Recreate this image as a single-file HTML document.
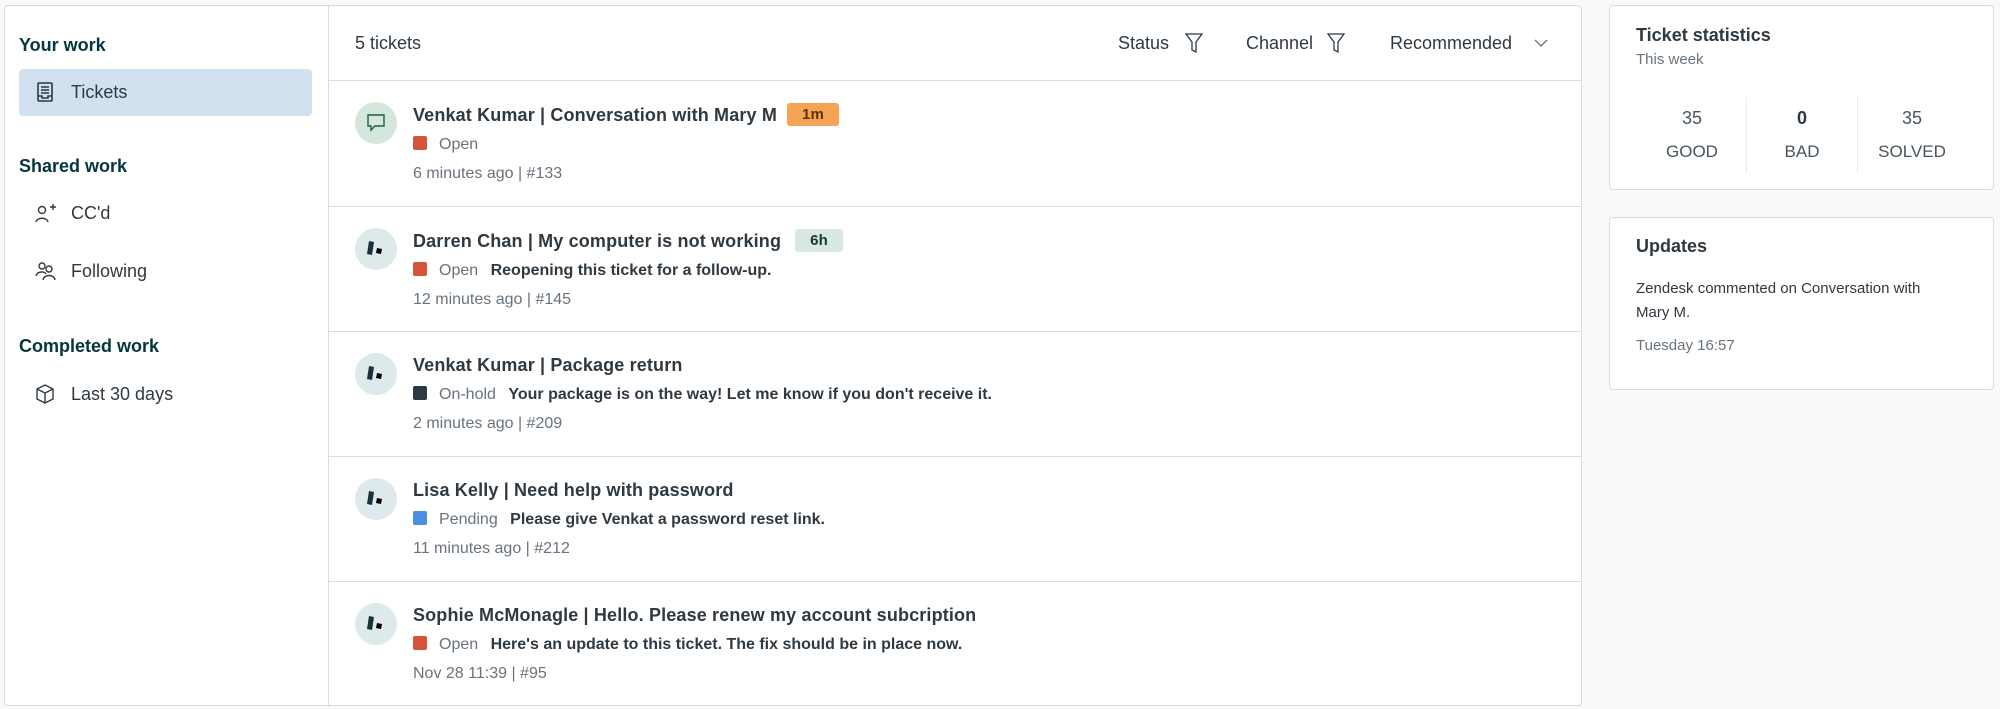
<!DOCTYPE html>
<html><head><meta charset="utf-8"><style>
*{box-sizing:border-box;margin:0;padding:0}
body{width:2000px;height:709px;background:#f8f9f9;font-family:"Liberation Sans",sans-serif;color:#2f3941;position:relative;overflow:hidden}
.abs{position:absolute}
.panel{position:absolute;background:#fff;border:1px solid #d8dcde;border-radius:4px}
.h{font-weight:bold;color:#03363d;font-size:18px}
.nav{font-size:18px;color:#2f3941}
.t{font-size:18px;font-weight:bold;color:#2f3941;white-space:nowrap;letter-spacing:0.15px}
.s{font-size:16px;color:#68737d;white-space:nowrap}
.b{font-weight:bold;color:#2f3941;margin-left:8px}
.sq{display:inline-block;width:14px;height:14px;border-radius:2px;vertical-align:-1px;margin-right:12px}
.row{position:absolute;left:0;width:1252px;height:126px;border-top:1px solid #d8dcde}
.av{position:absolute;left:26px;top:21px;width:42px;height:42px;border-radius:50%;background:#dde9ea}
.badge{display:inline-block;font-size:15px;font-weight:bold;padding:3px 15px;border-radius:3px;margin-left:10px;vertical-align:2px}
</style></head><body>
<div class="panel" style="left:4px;top:5px;width:325px;height:701px;border-right:none;border-radius:4px 0 0 4px"></div>
<div class="abs h" style="left:19px;top:35px">Your work</div>
<div class="abs" style="left:19px;top:69px;width:293px;height:47px;background:#d2e1ef;border-radius:4px"></div>
<svg class="abs" style="left:36px;top:82px" width="18" height="20" viewBox="0 0 18 20" fill="none" stroke="#2f3941" stroke-width="1.6"><rect x="2" y="1" width="14" height="18" rx="1"/><path d="M5 5h8M5 8h8M5 11h8M2 14h4v2h6v-2h4"/></svg>
<div class="abs nav" style="left:71px;top:82px">Tickets</div>
<div class="abs h" style="left:19px;top:156px">Shared work</div>
<svg class="abs" style="left:34px;top:203px" width="24" height="20" viewBox="0 0 24 20" fill="none" stroke="#2f3941" stroke-width="1.4"><circle cx="8" cy="7" r="3.5"/><path d="M2 19c1-5 11-5 12 0M16 4h6M19 1v6"/></svg>
<div class="abs nav" style="left:71px;top:203px">CC'd</div>
<svg class="abs" style="left:34px;top:261px" width="24" height="20" viewBox="0 0 24 20" fill="none" stroke="#2f3941" stroke-width="1.4"><circle cx="8" cy="5" r="3"/><circle cx="15" cy="8" r="3"/><path d="M2 15c1-5 9-5 10-2M9 19c1-6 11-6 12 0"/></svg>
<div class="abs nav" style="left:71px;top:261px">Following</div>
<div class="abs h" style="left:19px;top:336px">Completed work</div>
<svg class="abs" style="left:34px;top:383px" width="22" height="22" viewBox="0 0 22 22" fill="none" stroke="#2f3941" stroke-width="1.4" stroke-linejoin="round"><path d="M11 2l8 4v10l-8 4-8-4V6zM3 6l8 4 8-4M11 10v10"/></svg>
<div class="abs nav" style="left:71px;top:384px">Last 30 days</div>

<div class="panel" style="left:328px;top:5px;width:1254px;height:701px;border-radius:0 4px 4px 0">
<div class="abs" style="left:26px;top:27px;font-size:18px">5 tickets</div>
<div class="abs" style="left:789px;top:27px;font-size:18px">Status</div>
<svg class="abs" style="left:856px;top:26px" width="18" height="22" viewBox="0 0 18 22" fill="none" stroke="#2f3941" stroke-width="1.3"><path d="M1 2h16l-6 8v10l-4-2v-8z"/></svg>
<div class="abs" style="left:917px;top:27px;font-size:18px">Channel</div>
<svg class="abs" style="left:998px;top:26px" width="18" height="22" viewBox="0 0 18 22" fill="none" stroke="#2f3941" stroke-width="1.3"><path d="M1 2h16l-6 8v10l-4-2v-8z"/></svg>
<div class="abs" style="left:1061px;top:27px;font-size:18px">Recommended</div>
<svg class="abs" style="left:1204px;top:32px" width="16" height="10" viewBox="0 0 16 10" fill="none" stroke="#68737d" stroke-width="1.3"><path d="M2 2l6 6 6-6"/></svg>

<div class="row" style="top:74px">
<div class="av" style="background:#d5e7dd"><svg style="margin:11px" width="20" height="20" viewBox="0 0 20 20" fill="none" stroke="#186146" stroke-width="1.4"><path d="M2 2h16v11H9l-4 4v-4H2z"/></svg></div>
<div class="abs t" style="left:84px;top:22px">Venkat Kumar | Conversation with Mary M<span class="badge" style="background:#f5a455;color:#5c3304">1m</span></div>
<div class="abs s" style="left:84px;top:55px"><span class="sq" style="background:#d4553a"></span>Open</div>
<div class="abs s" style="left:84px;top:84px">6 minutes ago | #133</div>
</div>
<div class="row" style="top:200px">
<div class="av"><svg style="margin:11px" width="20" height="20" viewBox="0 0 20 20"><path d="M3 2l5 1-2 13-5-1z" fill="#17323a"/><path d="M11 9l5 1-1 5-5-1z" fill="#000"/></svg></div>
<div class="abs t" style="left:84px;top:22px">Darren Chan | My computer is not working<span class="badge" style="background:#d8e8e0;color:#143a2b;margin-left:14px">6h</span></div>
<div class="abs s" style="left:84px;top:55px"><span class="sq" style="background:#d4553a"></span>Open <span class="b">Reopening this ticket for a follow-up.</span></div>
<div class="abs s" style="left:84px;top:84px">12 minutes ago | #145</div>
</div>
<div class="row" style="top:325px">
<div class="av"><svg style="margin:11px" width="20" height="20" viewBox="0 0 20 20"><path d="M3 2l5 1-2 13-5-1z" fill="#17323a"/><path d="M11 9l5 1-1 5-5-1z" fill="#000"/></svg></div>
<div class="abs t" style="left:84px;top:23px">Venkat Kumar | Package return</div>
<div class="abs s" style="left:84px;top:54px"><span class="sq" style="background:#2f3941"></span>On-hold <span class="b">Your package is on the way! Let me know if you don't receive it.</span></div>
<div class="abs s" style="left:84px;top:83px">2 minutes ago | #209</div>
</div>
<div class="row" style="top:450px">
<div class="av"><svg style="margin:11px" width="20" height="20" viewBox="0 0 20 20"><path d="M3 2l5 1-2 13-5-1z" fill="#17323a"/><path d="M11 9l5 1-1 5-5-1z" fill="#000"/></svg></div>
<div class="abs t" style="left:84px;top:23px">Lisa Kelly | Need help with password</div>
<div class="abs s" style="left:84px;top:54px"><span class="sq" style="background:#4a90e2"></span>Pending <span class="b">Please give Venkat a password reset link.</span></div>
<div class="abs s" style="left:84px;top:83px">11 minutes ago | #212</div>
</div>
<div class="row" style="top:575px">
<div class="av"><svg style="margin:11px" width="20" height="20" viewBox="0 0 20 20"><path d="M3 2l5 1-2 13-5-1z" fill="#17323a"/><path d="M11 9l5 1-1 5-5-1z" fill="#000"/></svg></div>
<div class="abs t" style="left:84px;top:23px">Sophie McMonagle | Hello. Please renew my account subcription</div>
<div class="abs s" style="left:84px;top:54px"><span class="sq" style="background:#d4553a"></span>Open <span class="b">Here's an update to this ticket. The fix should be in place now.</span></div>
<div class="abs s" style="left:84px;top:83px">Nov 28 11:39 | #95</div>
</div>
</div>

<div class="panel" style="left:1609px;top:5px;width:385px;height:185px">
<div class="abs" style="left:26px;top:19px;font-size:18px;font-weight:bold">Ticket statistics</div>
<div class="abs s" style="left:26px;top:45px;font-size:15px">This week</div>
<div class="abs" style="left:136px;top:91px;width:1px;height:76px;background:#e9ebed"></div>
<div class="abs" style="left:247px;top:91px;width:1px;height:76px;background:#e9ebed"></div>
<div class="abs" style="left:30px;top:102px;width:104px;text-align:center;font-size:18px;color:#49545c">35</div>
<div class="abs" style="left:30px;top:136px;width:104px;text-align:center;font-size:17px;color:#49545c">GOOD</div>
<div class="abs" style="left:140px;top:102px;width:104px;text-align:center;font-size:18px;font-weight:bold">0</div>
<div class="abs" style="left:140px;top:136px;width:104px;text-align:center;font-size:17px;color:#49545c">BAD</div>
<div class="abs" style="left:250px;top:102px;width:104px;text-align:center;font-size:18px;color:#49545c">35</div>
<div class="abs" style="left:250px;top:136px;width:104px;text-align:center;font-size:17px;color:#49545c">SOLVED</div>
</div>
<div class="panel" style="left:1609px;top:217px;width:385px;height:173px">
<div class="abs" style="left:26px;top:18px;font-size:18px;font-weight:bold">Updates</div>
<div class="abs" style="left:26px;top:59px;width:318px;font-size:15px;line-height:24px;color:#2f3941">Zendesk commented on Conversation with Mary M.</div>
<div class="abs s" style="left:26px;top:119px;font-size:15px">Tuesday 16:57</div>
</div>
</body></html>
